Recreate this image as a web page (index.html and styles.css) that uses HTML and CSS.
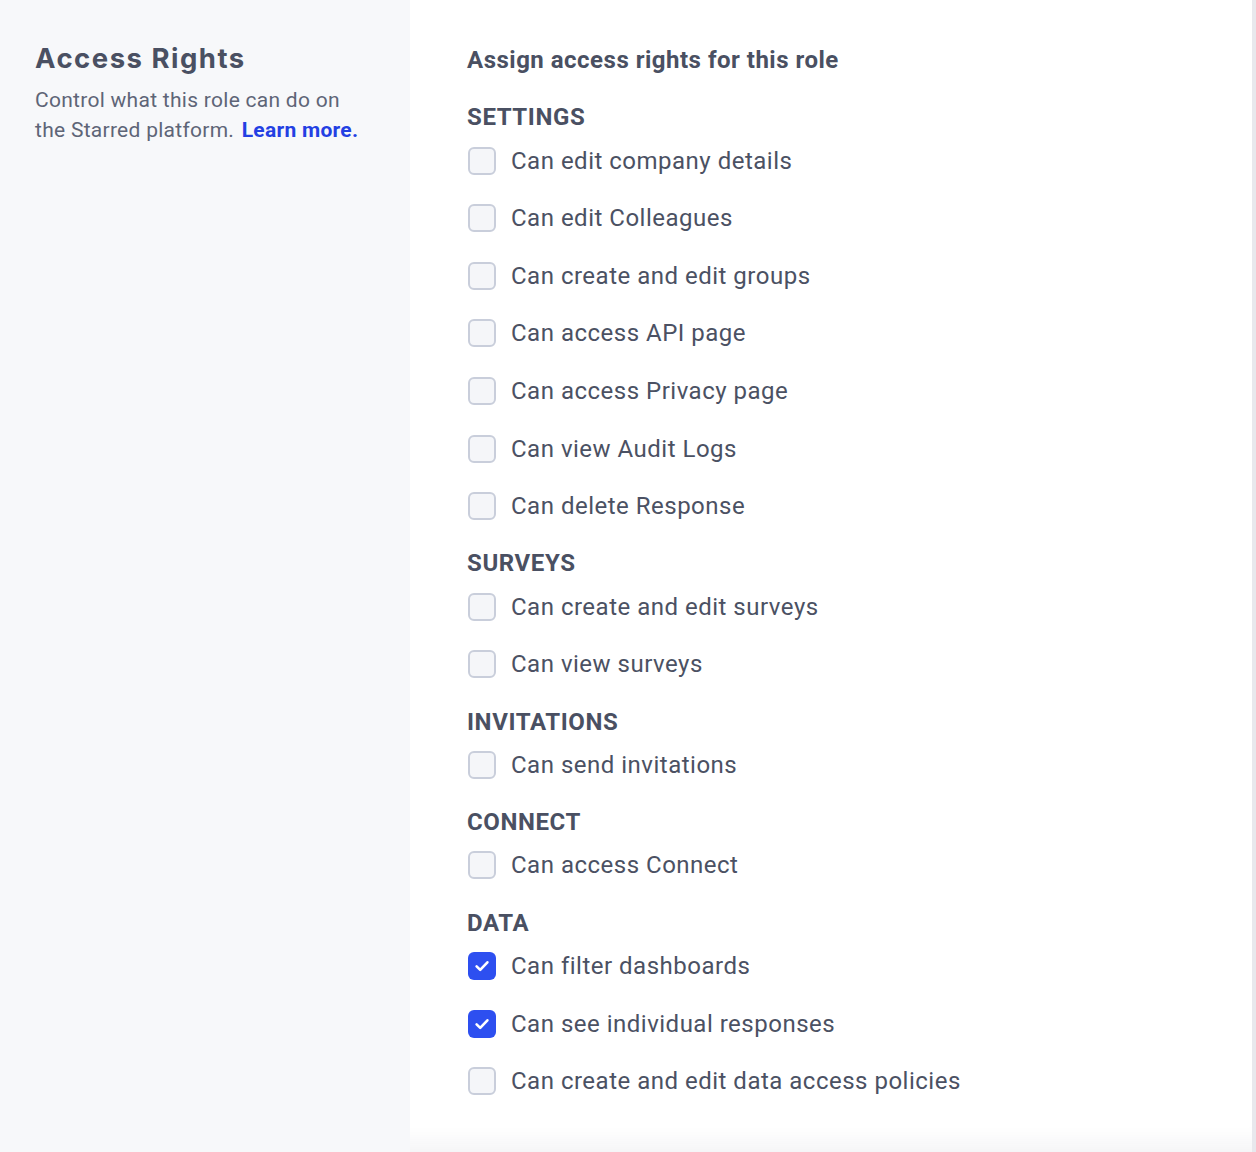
FILE: index.html
```html
<!DOCTYPE html>
<html lang="en">
<head>
<meta charset="utf-8">
<title>Access Rights</title>
<link rel="stylesheet" href="styles.css">
</head>
<body>
<div class="page">
  <aside class="intro">
    <h1 class="intro-title">Access Rights</h1>
    <p class="intro-text">Control what this role can do on the Starred platform. <a class="intro-link" href="#">Learn more.</a></p>
  </aside>
  <main class="rights">
    <h2 class="rights-title">Assign access rights for this role</h2>
    <section class="group">
      <h3 class="group-title">SETTINGS</h3>
      <ul class="options">
        <li class="option"><span class="box"></span><span class="label">Can edit company details</span></li>
        <li class="option"><span class="box"></span><span class="label">Can edit Colleagues</span></li>
        <li class="option"><span class="box"></span><span class="label">Can create and edit groups</span></li>
        <li class="option"><span class="box"></span><span class="label">Can access API page</span></li>
        <li class="option"><span class="box"></span><span class="label">Can access Privacy page</span></li>
        <li class="option"><span class="box"></span><span class="label">Can view Audit Logs</span></li>
        <li class="option"><span class="box"></span><span class="label">Can delete Response</span></li>
      </ul>
    </section>
    <section class="group">
      <h3 class="group-title">SURVEYS</h3>
      <ul class="options">
        <li class="option"><span class="box"></span><span class="label">Can create and edit surveys</span></li>
        <li class="option"><span class="box"></span><span class="label">Can view surveys</span></li>
      </ul>
    </section>
    <section class="group">
      <h3 class="group-title">INVITATIONS</h3>
      <ul class="options">
        <li class="option"><span class="box"></span><span class="label">Can send invitations</span></li>
      </ul>
    </section>
    <section class="group">
      <h3 class="group-title">CONNECT</h3>
      <ul class="options">
        <li class="option"><span class="box"></span><span class="label">Can access Connect</span></li>
      </ul>
    </section>
    <section class="group">
      <h3 class="group-title">DATA</h3>
      <ul class="options">
        <li class="option"><span class="box box-checked"><svg viewBox="0 0 28 28" width="28" height="28"><path d="M8.6 14.4l3.6 3.5 7.2-7.6" fill="none" stroke="#ffffff" stroke-width="2.6" stroke-linecap="round" stroke-linejoin="round"/></svg></span><span class="label">Can filter dashboards</span></li>
        <li class="option"><span class="box box-checked"><svg viewBox="0 0 28 28" width="28" height="28"><path d="M8.6 14.4l3.6 3.5 7.2-7.6" fill="none" stroke="#ffffff" stroke-width="2.6" stroke-linecap="round" stroke-linejoin="round"/></svg></span><span class="label">Can see individual responses</span></li>
        <li class="option"><span class="box"></span><span class="label">Can create and edit data access policies</span></li>
      </ul>
    </section>
  </main>
  <div class="edge"></div>
</div>
</body>
</html>
```

FILE: styles.css
```css
* {
  box-sizing: border-box;
}

html, body {
  margin: 0;
  padding: 0;
  background: #ffffff;
}

body {
  font-family: Roboto, "Liberation Sans", Arial, sans-serif;
  color: #4a5062;
}

.page {
  display: flex;
  width: 1256px;
  height: 1152px;
  overflow: hidden;
  box-shadow: inset 0 -26px 22px -18px rgba(30, 40, 70, 0.06);
}

.intro {
  width: 410px;
  flex: 0 0 410px;
  background: #f7f8fa;
  padding: 42px 45px 0 35px;
}

.intro-title {
  margin: 0;
  font-family: Inter, "Open Sans", sans-serif;
  font-weight: 700;
  font-size: 27.5px;
  line-height: 32px;
  letter-spacing: 1.5px;
  color: #4a5062;
}

.intro-text {
  margin: 11px 0 0;
  font-size: 21px;
  line-height: 30px;
  letter-spacing: 0.28px;
  color: #5e6577;
}

.intro-link {
  color: #2340e3;
  font-weight: 700;
  text-decoration: none;
  margin-left: 2px;
}

.rights {
  flex: 1;
  padding: 46px 0 0 57px;
  display: flex;
  flex-direction: column;
  gap: 29.2px;
}

.rights-title {
  margin: 0;
  font-size: 24px;
  line-height: 28px;
  font-weight: 700;
  letter-spacing: 0.5px;
  color: #4a5062;
}

.group {
  display: flex;
  flex-direction: column;
  gap: 15.4px;
}

.group-title {
  margin: 0;
  font-size: 24px;
  line-height: 28px;
  font-weight: 700;
  letter-spacing: 0.6px;
  color: #4a5062;
}

.options {
  list-style: none;
  margin: 0;
  padding: 0;
  display: flex;
  flex-direction: column;
  gap: 29.6px;
}

.option {
  display: flex;
  align-items: center;
  gap: 15px;
  height: 28px;
}

.box {
  width: 28px;
  height: 28px;
  flex: 0 0 28px;
  margin-left: 1px;
  border: 2px solid #c9cedb;
  border-radius: 6px;
  background: #f5f6f9;
  display: flex;
  align-items: center;
  justify-content: center;
}

.box-checked {
  border: none;
  background: #2d4ff0;
}

.box-checked svg {
  display: block;
}

.label {
  font-size: 24px;
  line-height: 28px;
  letter-spacing: 0.5px;
  color: #4b5163;
}

.edge {
  width: 4px;
  flex: 0 0 4px;
  background: #e8e8ed;
}
```
